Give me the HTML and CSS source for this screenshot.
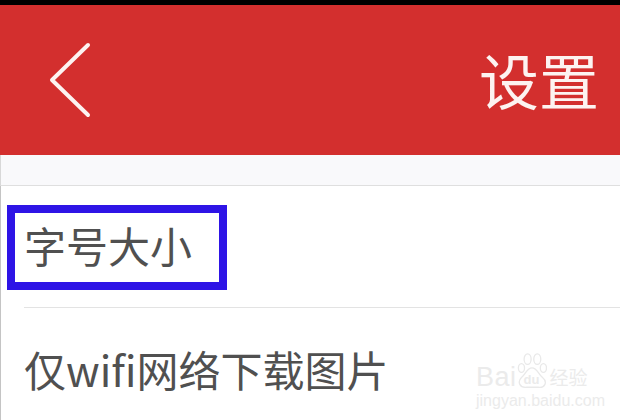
FILE: index.html
```html
<!DOCTYPE html>
<html lang="zh-CN">
<head>
<meta charset="utf-8">
<title>设置</title>
<link rel="stylesheet" href="styles.css">
</head>
<body>
<div class="screen">
  <div class="status"></div>
  <header class="bar">
    <svg class="back" width="44" height="78" viewBox="0 0 44 78"><path d="M39 4 L3 39 L39 74" fill="none" stroke="#fdf3f1" stroke-width="4" stroke-linecap="round" stroke-linejoin="round"/></svg>
    <h1 class="title">设置</h1>
  </header>
  <div class="spacer"></div>
  <main class="list">
    <div class="row row-first"><span class="label boxed">字号大小</span></div>
    <div class="row row-second"><span class="label">仅wifi网络下载图片</span></div>
  </main>
  <div class="mark">
    <div class="mark-top">
      <span class="mark-bai">Bai</span>
      <span class="mark-paw">
        <svg width="30" height="36" viewBox="0 0 34 41"><g fill="none" stroke="#e9e9e9" stroke-width="1.5"><ellipse cx="5" cy="17" rx="3.5" ry="5"/><ellipse cx="12" cy="7" rx="4" ry="6"/><ellipse cx="23" cy="7" rx="4" ry="6"/><ellipse cx="30" cy="17" rx="3.5" ry="5"/><path d="M17 17 C11 17 10 24 5 28 C0 33 3 40 11 39 L24 39 C32 40 35 33 29 28 C24 24 23 17 17 17 Z"/></g></svg>
        <span class="mark-du">du</span>
      </span>
      <span class="mark-cn">经验</span>
    </div>
    <div class="mark-url">jingyan.baidu.com</div>
  </div>
</div>
</body>
</html>
```
FILE: styles.css
```css
html, body {
  margin: 0;
  padding: 0;
  background: #fff;
}
.screen {
  position: relative;
  width: 620px;
  height: 420px;
  overflow: hidden;
  display: flex;
  flex-direction: column;
  font-family: "Noto Sans CJK SC", "Noto Sans", sans-serif;
}
.status {
  height: 5px;
  background: #000;
  flex: none;
}
.bar {
  height: 150px;
  background: #d32f2e;
  flex: none;
  display: flex;
  align-items: center;
  justify-content: space-between;
  padding: 0 21px 0 49px;
}
.back {
  flex: none;
}
.title {
  margin: -2px 0 0;
  font-size: 60px;
  line-height: 70px;
  font-weight: 400;
  color: #fdf3f1;
}
.spacer {
  height: 30px;
  background: #f9f9fb;
  border-bottom: 1px solid #dfdfdf;
  border-left: 1px solid #d8d8d8;
  flex: none;
}
.list {
  flex: 1;
  padding-left: 6px;
  border-left: 1px solid #c4c4c4;
}
.row-first {
  padding-top: 19px;
  padding-bottom: 17px;
}
.label {
  display: block;
  font-size: 42px;
  line-height: 60px;
  font-weight: 400;
  color: #505050;
  white-space: nowrap;
}
.boxed {
  width: 220px;
  height: 85px;
  box-sizing: border-box;
  border: 8px solid #2e14e6;
  padding: 2px 0 0 9px;
}
.row-second {
  margin-left: 17px;
  border-top: 1px solid #e3e3e3;
  padding-top: 31px;
}
.mark {
  position: absolute;
  left: 476px;
  top: 352px;
  width: 112px;
  color: #ebebeb;
  font-family: "Liberation Sans", sans-serif;
}
.mark-top {
  display: flex;
  align-items: flex-end;
  height: 37px;
}
.mark-bai {
  font-size: 27px;
  line-height: 24px;
  letter-spacing: 0.5px;
}
.mark-paw {
  position: relative;
  display: block;
  width: 30px;
  height: 36px;
  flex: none;
}
.mark-paw svg {
  display: block;
}
.mark-du {
  position: absolute;
  left: 7px;
  bottom: 2px;
  font-size: 13px;
  line-height: 14px;
  font-weight: 700;
}
.mark-cn {
  font-family: "Noto Sans CJK SC", sans-serif;
  font-size: 19px;
  line-height: 24px;
  margin-left: 3px;
  white-space: nowrap;
}
.mark-url {
  font-size: 16px;
  line-height: 18px;
  margin-top: 3px;
  white-space: nowrap;
}
```
